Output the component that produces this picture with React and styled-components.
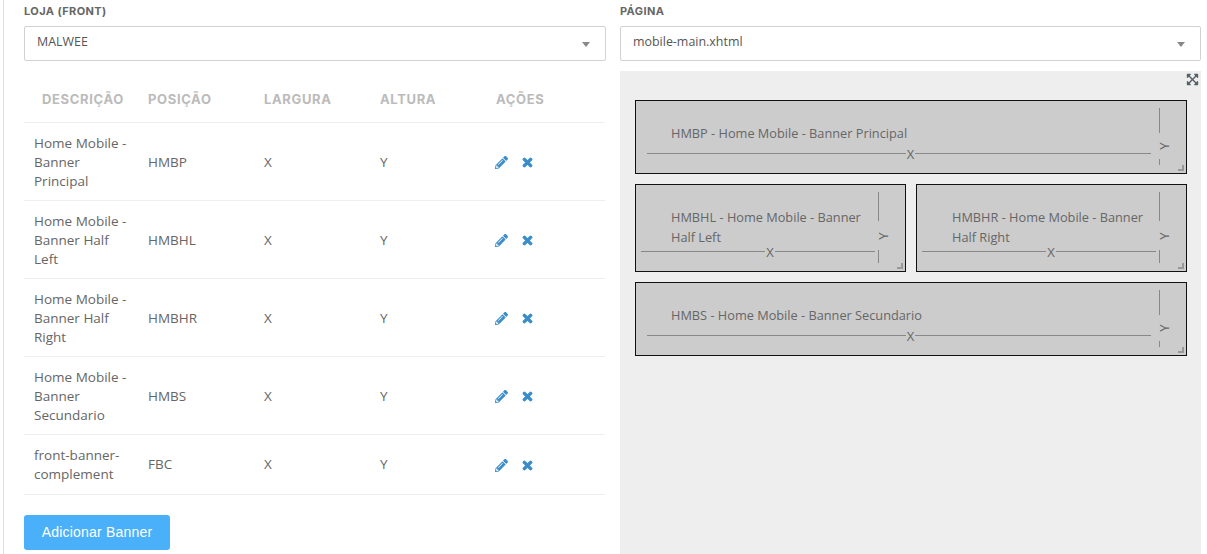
import React from 'react'
import styled, { createGlobalStyle } from 'styled-components'
import { FaPencilAlt, FaTimes, FaExpandArrowsAlt } from 'react-icons/fa'

const Global = createGlobalStyle`
  html, body { margin: 0; padding: 0; background: #fff; height: 554px; overflow: hidden; }
  body { font-family: "Open Sans", "Noto Sans", sans-serif; font-size: 13px; color: #666; }
`

const Page = styled.div`
  height: 554px;
  overflow: hidden;
  margin-left: 3px;
  border-left: 1px solid #ddd;
  padding: 0 6px 0 20px;
  display: grid;
  grid-template-columns: 582px 581px;
  column-gap: 14px;
  box-sizing: border-box;
`
const Column = styled.div`
  display: flex;
  flex-direction: column;
  min-width: 0;
`
const FieldLabel = styled.label`
  display: block;
  height: 26px;
  padding-top: 4px;
  box-sizing: border-box;
  font-family: "Inter", sans-serif;
  font-weight: 700;
  font-size: 11px;
  letter-spacing: 0.4px;
  line-height: 14px;
  color: #666;
`
const Select = styled.div`
  height: 35px;
  box-sizing: border-box;
  border: 1px solid #d2d2d2;
  border-radius: 2px;
  padding: 0 12px;
  display: flex;
  align-items: center;
  justify-content: space-between;
  font-size: 12.45px;
  color: #555;
  & > span { margin-top: -4px; }
`
const Caret = styled.i`
  width: 0;
  height: 0;
  margin-right: 3px;
  margin-top: 2px;
  border-left: 4px solid transparent;
  border-right: 4px solid transparent;
  border-top: 5px solid #888;
`
const Table = styled.table`
  width: 581px;
  margin-top: 15px;
  border-collapse: collapse;
  table-layout: fixed;
  th {
    height: 46px;
    padding: 0 10px;
    box-sizing: border-box;
    text-align: left;
    font-family: "Inter", sans-serif;
    font-weight: 700;
    font-size: 13px;
    letter-spacing: 0.65px;
    color: #bbb;
    border-bottom: 1px solid #eee;
  }
  th:first-child { padding-left: 18px; }
  td {
    padding: 11px 10px 9px;
    line-height: 19px;
    font-size: 13.5px;
    color: #666;
    border-bottom: 1px solid #eee;
    vertical-align: middle;
  }
  tbody tr:last-child td { padding-bottom: 10px; }
`
const Actions = styled.div`
  display: flex;
  align-items: center;
  gap: 13px;
  margin: 1px 0 0 -1px;
  color: #3b8ccb;
  font-size: 13px;
`
const CloseIcon = styled(FaTimes)`
  stroke: currentColor;
  stroke-width: 40px;
`
const AddButton = styled.button`
  align-self: flex-start;
  margin-top: 20px;
  width: 146px;
  height: 35px;
  border: 0;
  border-radius: 3px;
  background: #4ab0f9;
  color: #fff;
  font-family: "Liberation Sans", Arial, sans-serif;
  font-size: 14px;
  letter-spacing: 0.2px;
`
const Canvas = styled.div`
  position: relative;
  margin-top: 10px;
  flex: 1;
  background: #eee;
  padding: 29px 14px 0 15px;
  display: flex;
  flex-wrap: wrap;
  align-content: flex-start;
  gap: 10px;
`
const Expand = styled(FaExpandArrowsAlt)`
  position: absolute;
  top: 2px;
  right: 2px;
  font-size: 13px;
  color: #55606b;
`
const Banner = styled.div`
  position: relative;
  box-sizing: border-box;
  width: ${p => (p.$half ? '271px' : '552px')};
  height: ${p => (p.$half ? '88px' : '74px')};
  border: 1px solid #111;
  background: #ccc;
  padding: 22px 40px 0 35px;
  font-size: 12.75px;
  line-height: 20px;
  color: #666;
`
const WidthLine = styled.div`
  position: absolute;
  left: ${p => (p.$half ? '5px' : '11px')};
  right: ${p => (p.$half ? '30px' : '35px')};
  bottom: 19px;
  height: 1px;
  background: #888;
`
const WidthMark = styled.span`
  position: absolute;
  bottom: 14px;
  left: 0;
  right: 1px;
  text-align: center;
  font-size: 13px;
  line-height: 10px;
  color: #666;
  & > b { font-weight: 400; background: #ccc; padding: 0 1px; }
`
const HeightLine = styled.div`
  position: absolute;
  right: 26px;
  width: 1px;
  background: #888;
  top: ${p => p.$top}px;
  height: ${p => p.$height}px;
`
const HeightMark = styled.span`
  position: absolute;
  right: 19px;
  top: ${p => p.$top}px;
  font-size: 13px;
  line-height: 14px;
  color: #666;
  transform: rotate(-90deg);
`
const Grip = styled.i`
  position: absolute;
  right: 2px;
  bottom: 2px;
  width: 6px;
  height: 6px;
  border-right: 2px solid #999;
  border-bottom: 2px solid #999;
  box-sizing: border-box;
`

const rows = [
  { desc: 'Home Mobile - Banner Principal', pos: 'HMBP' },
  { desc: 'Home Mobile - Banner Half Left', pos: 'HMBHL' },
  { desc: 'Home Mobile - Banner Half Right', pos: 'HMBHR' },
  { desc: 'Home Mobile - Banner Secundario', pos: 'HMBS' },
  { desc: 'front-banner-complement', pos: 'FBC' },
]

const banners = [
  { text: 'HMBP - Home Mobile - Banner Principal' },
  { text: 'HMBHL - Home Mobile - Banner Half Left', half: true },
  { text: 'HMBHR - Home Mobile - Banner Half Right', half: true },
  { text: 'HMBS - Home Mobile - Banner Secundario' },
]

function BannerBox({ text, half }) {
  return (
    <Banner $half={half}>
      {text}
      <WidthLine $half={half} />
      <WidthMark><b>X</b></WidthMark>
      <HeightLine $top={7} $height={half ? 29 : 25} />
      <HeightMark $top={half ? 44 : 38}>Y</HeightMark>
      <HeightLine $top={half ? 65 : 58} $height={half ? 13 : 6} />
      <Grip />
    </Banner>
  )
}

export default function App() {
  return (
    <Page>
      <Global />
      <Column>
        <FieldLabel>LOJA (FRONT)</FieldLabel>
        <Select><span>MALWEE</span><Caret /></Select>
        <Table>
          <colgroup>
            <col style={{ width: 114 }} />
            <col style={{ width: 116 }} />
            <col style={{ width: 116 }} />
            <col style={{ width: 116 }} />
            <col />
          </colgroup>
          <thead>
            <tr>
              <th>DESCRIÇÃO</th>
              <th>POSIÇÃO</th>
              <th>LARGURA</th>
              <th>ALTURA</th>
              <th>AÇÕES</th>
            </tr>
          </thead>
          <tbody>
            {rows.map(r => (
              <tr key={r.pos}>
                <td>{r.desc}</td>
                <td>{r.pos}</td>
                <td>X</td>
                <td>Y</td>
                <td>
                  <Actions><FaPencilAlt /><CloseIcon /></Actions>
                </td>
              </tr>
            ))}
          </tbody>
        </Table>
        <AddButton>Adicionar Banner</AddButton>
      </Column>
      <Column>
        <FieldLabel>PÁGINA</FieldLabel>
        <Select><span>mobile-main.xhtml</span><Caret /></Select>
        <Canvas>
          <Expand />
          {banners.map(b => <BannerBox key={b.text} {...b} />)}
        </Canvas>
      </Column>
    </Page>
  )
}
